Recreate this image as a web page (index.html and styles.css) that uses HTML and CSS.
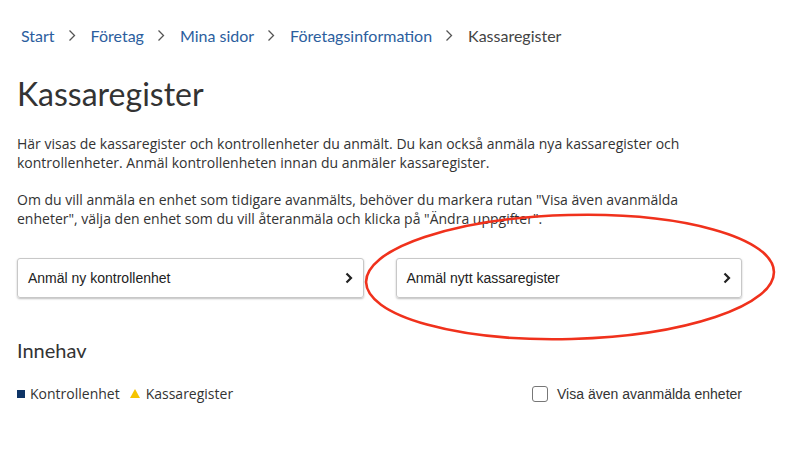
FILE: index.html
```html
<!DOCTYPE html>
<html lang="sv">
<head>
    <meta charset="UTF-8">
    <title>Kassaregister</title>
    <link rel="stylesheet" href="styles.css">
</head>
<body>
    <div class="page">
        <nav class="crumbs">
            <a href="#">Start</a>
            <svg class="sep" width="8" height="13" viewBox="0 0 8 13"><path d="M1.5 1.5 L6.5 6.5 L1.5 11.5" fill="none" stroke="#555" stroke-width="1.3"/></svg>
            <a href="#">Företag</a>
            <svg class="sep" width="8" height="13" viewBox="0 0 8 13"><path d="M1.5 1.5 L6.5 6.5 L1.5 11.5" fill="none" stroke="#555" stroke-width="1.3"/></svg>
            <a href="#">Mina sidor</a>
            <svg class="sep" width="8" height="13" viewBox="0 0 8 13"><path d="M1.5 1.5 L6.5 6.5 L1.5 11.5" fill="none" stroke="#555" stroke-width="1.3"/></svg>
            <a href="#">Företagsinformation</a>
            <svg class="sep" width="8" height="13" viewBox="0 0 8 13"><path d="M1.5 1.5 L6.5 6.5 L1.5 11.5" fill="none" stroke="#555" stroke-width="1.3"/></svg>
            <span class="current">Kassaregister</span>
        </nav>

        <h1>Kassaregister</h1>

        <p class="intro">Här visas de kassaregister och kontrollenheter du anmält. Du kan också anmäla nya kassaregister och kontrollenheter. Anmäl kontrollenheten innan du anmäler kassaregister.</p>
        <p class="intro">Om du vill anmäla en enhet som tidigare avanmälts, behöver du markera rutan "Visa även avanmälda enheter", välja den enhet som du vill återanmäla och klicka på "Ändra uppgifter".</p>

        <div class="actions">
            <a class="action-btn" href="#">
                <span>Anmäl ny kontrollenhet</span>
                <svg width="8" height="12" viewBox="0 0 8 12"><path d="M1.5 1.5 L6 6 L1.5 10.5" fill="none" stroke="#222" stroke-width="2.2"/></svg>
            </a>
            <a class="action-btn" href="#">
                <span>Anmäl nytt kassaregister</span>
                <svg width="8" height="12" viewBox="0 0 8 12"><path d="M1.5 1.5 L6 6 L1.5 10.5" fill="none" stroke="#222" stroke-width="2.2"/></svg>
            </a>
        </div>

        <h2>Innehav</h2>

        <div class="legend-row">
            <div class="legend">
                <span class="sq"></span>Kontrollenhet
                <span class="tri"></span>Kassaregister
            </div>
            <label class="check">
                <span class="box"></span>Visa även avanmälda enheter
            </label>
        </div>
    </div>

    <!-- annotation ring -->
    <svg class="ring" width="420" height="135" viewBox="0 0 420 135">
        <ellipse cx="208" cy="66" rx="204" ry="62" fill="none" stroke="#f0311c" stroke-width="2.6" transform="rotate(-1.5 208 66)"/>
    </svg>
</body>
</html>
```

FILE: styles.css
```css
body {
    margin: 0;
    background: #fff;
    color: #333;
    font-family: "Open Sans", Arial, sans-serif;
}
.page {
    width: 725px;
    padding: 24px 0 0 17px;
}
.crumbs {
    display: flex;
    align-items: center;
    font-family: Lato, sans-serif;
    font-size: 16px;
    padding-left: 4px;
    height: 22px;
}
.crumbs a {
    color: #2c5e9e;
    text-decoration: none;
}
.crumbs .current {
    color: #444;
}
.sep {
    margin: 0 15px 0 13px;
}
h1 {
    font-family: Lato, sans-serif;
    font-weight: 400;
    font-size: 32px;
    color: #333;
    margin: 28px 0 0 0;
    line-height: 40px;
}
.intro {
    font-size: 14px;
    line-height: 19px;
    margin: 20px 0 0 0;
    color: #333;
}
.intro + .intro {
    margin-top: 18px;
}
.actions {
    display: flex;
    gap: 32px;
    margin-top: 30px;
}
.action-btn {
    flex: 1;
    height: 38px;
    display: flex;
    align-items: center;
    justify-content: space-between;
    padding: 0 10px 0 10px;
    border: 1px solid #c8c8c8;
    border-radius: 3px;
    box-shadow: 0 1px 2px rgba(0,0,0,0.25);
    text-decoration: none;
    color: #222;
    font-family: "Liberation Sans", Arial, sans-serif;
    font-size: 14px;
}
h2 {
    font-family: Lato, sans-serif;
    font-weight: 400;
    font-size: 20px;
    margin: 40px 0 0 0;
    color: #333;
}
.legend-row {
    display: flex;
    justify-content: space-between;
    align-items: center;
    margin-top: 22px;
}
.legend {
    font-size: 14px;
    display: flex;
    align-items: center;
}
.sq {
    width: 8px;
    height: 8px;
    background: #0e3466;
    margin-right: 5px;
}
.tri {
    width: 0;
    height: 0;
    border-left: 5px solid transparent;
    border-right: 5px solid transparent;
    border-bottom: 9px solid #f5c400;
    margin: 0 6px 0 10px;
}
.check {
    display: flex;
    align-items: center;
    font-family: "Liberation Sans", Arial, sans-serif;
    font-size: 14px;
    color: #333;
}
.box {
    width: 14px;
    height: 14px;
    border: 1px solid #777;
    border-radius: 3px;
    margin-right: 9px;
}
.ring {
    position: absolute;
    left: 362px;
    top: 211px;
}
```
